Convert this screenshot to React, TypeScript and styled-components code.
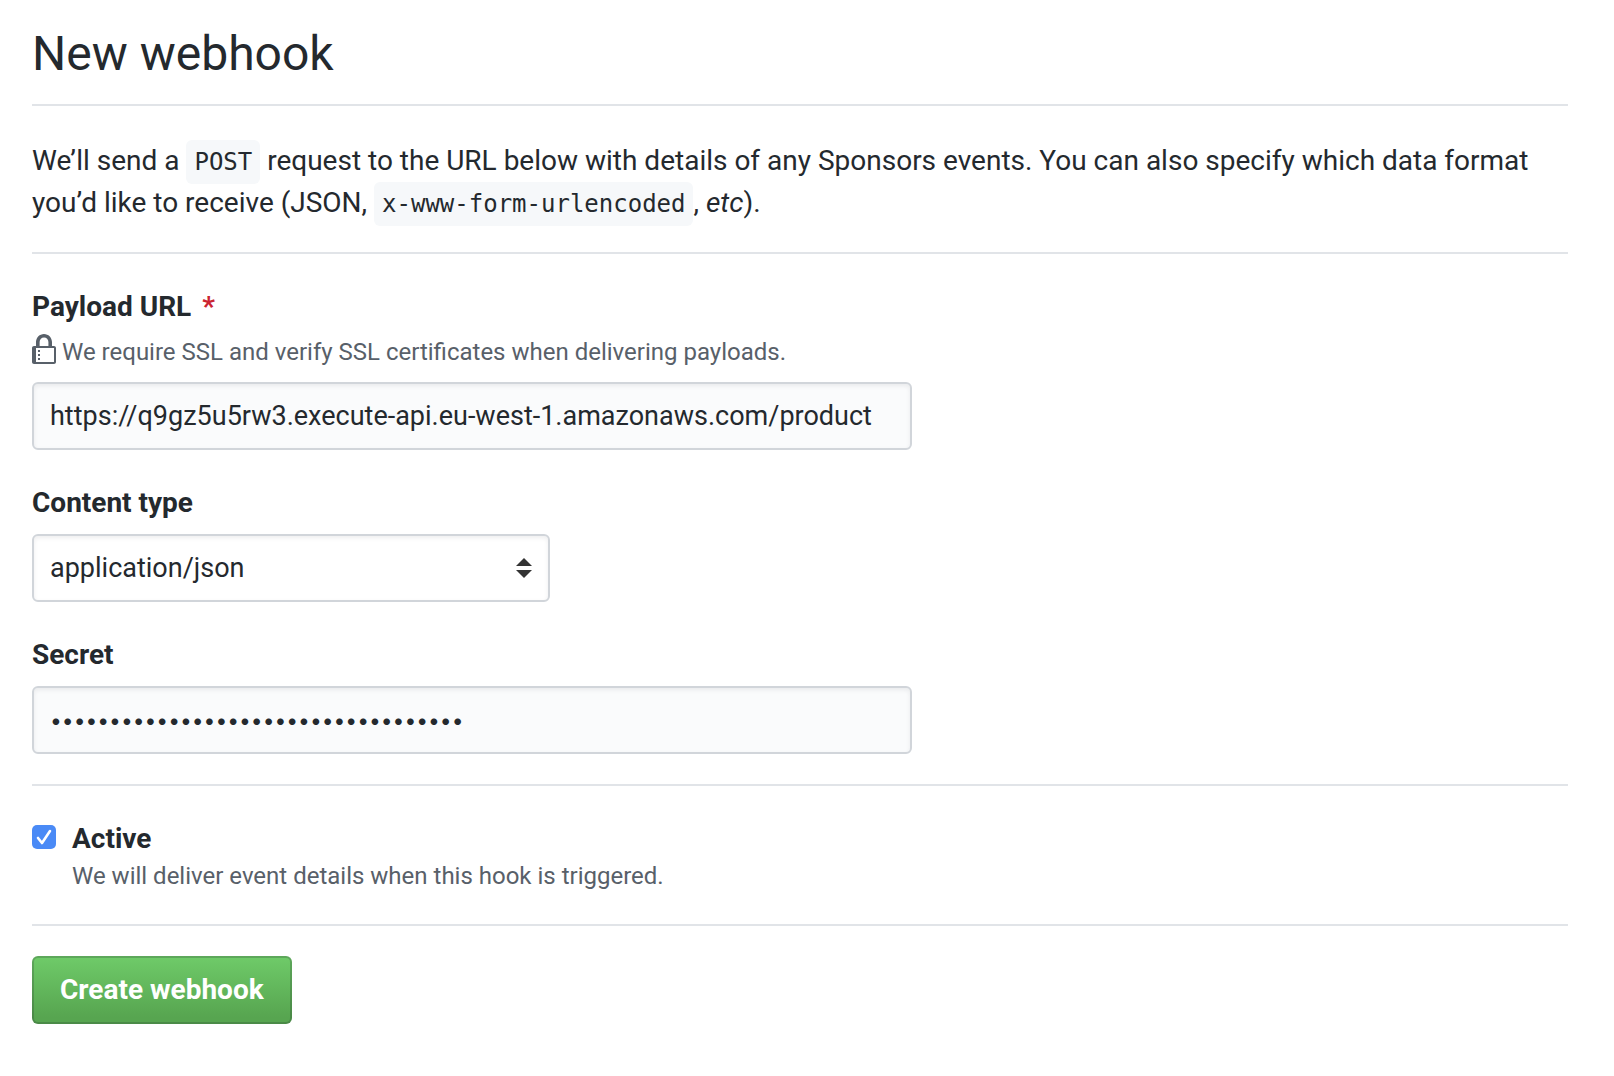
import { useState } from 'react';
import styled, { createGlobalStyle } from 'styled-components';

const sans = `Roboto, "Liberation Sans", sans-serif`;
const mono = `"DejaVu Sans Mono", "Liberation Mono", monospace`;

const arrows = `url("data:image/svg+xml,%3Csvg xmlns='http://www.w3.org/2000/svg' viewBox='0 0 16 20'%3E%3Cpath fill='%23333' d='M0 8 8 0l8 8zM0 12l8 8 8-8z'/%3E%3C/svg%3E")`;
const tick = `url("data:image/svg+xml,%3Csvg xmlns='http://www.w3.org/2000/svg' viewBox='0 0 24 24'%3E%3Cpath fill='none' stroke='%23fff' stroke-width='2.6' stroke-linecap='round' stroke-linejoin='round' d='M6 13l4 5L18 6'/%3E%3C/svg%3E")`;

const GlobalStyle = createGlobalStyle`
  *, *::before, *::after { box-sizing: border-box; }
  body {
    margin: 0;
    background: #fff;
    color: #24292e;
    font-family: ${sans};
    font-size: 28px;
    line-height: 42px;
  }
`;

const Page = styled.main`
  padding: 20px 46px 52px 32px;
`;

const Title = styled.h1`
  margin: 0;
  padding-bottom: 16px;
  border-bottom: 2px solid #e1e4e8;
  font-size: 48px;
  font-weight: 400;
  line-height: 68px;
`;

const Intro = styled.p`
  margin: 34px 0 28px;
`;

const Code = styled.code`
  padding: 8px;
  border-radius: 6px;
  background: #f6f8fa;
  font-family: ${mono};
  font-size: 24px;
  line-height: 24px;
`;

const Form = styled.form`
  display: flex;
  flex-direction: column;
`;

const Section = styled.div`
  display: flex;
  flex-direction: column;
  align-items: flex-start;
  gap: 30px;
  padding: 30px 0;
  border-top: 2px solid #e1e4e8;
`;

const Field = styled.div`
  display: flex;
  flex-direction: column;
  align-items: flex-start;
  gap: 12px;
  width: 100%;
`;

const FieldHead = styled.div`
  display: flex;
  flex-direction: column;
  gap: 8px;
`;

const Label = styled.label`
  display: block;
  padding-top: 4px;
  font-weight: 700;
  line-height: 38px;
`;

const Required = styled.span`
  margin-left: 4px;
  color: #cb2431;
`;

const Note = styled.p`
  display: flex;
  align-items: flex-start;
  gap: 6px;
  margin: 0;
  color: #586069;
  font-size: 24px;
  line-height: 36px;
`;

const LockIcon = styled.svg`
  flex: none;
  width: 24px;
  height: 32px;
  fill: currentColor;
`;

const TextBox = styled.input`
  width: 100%;
  max-width: 880px;
  height: 68px;
  padding: 0 16px;
  border: 2px solid #d1d5da;
  border-radius: 6px;
  background: #fafbfc;
  box-shadow: inset 0 2px 4px rgba(27, 31, 35, 0.075);
  color: inherit;
  font: inherit;
  font-size: 27px;
  outline: none;

  &[type='password'] {
    font-family: Inter, ${sans};
    font-size: 21px;
  }
`;

const Select = styled.select`
  appearance: none;
  width: 100%;
  max-width: 518px;
  height: 68px;
  padding: 0 48px 0 16px;
  border: 2px solid #d1d5da;
  border-radius: 6px;
  background: #fff ${arrows} no-repeat right 16px center / 16px 20px;
  box-shadow: inset 0 2px 4px rgba(27, 31, 35, 0.075);
  color: inherit;
  font: inherit;
  font-size: 27px;
`;

const CheckRow = styled.div`
  display: grid;
  grid-template-columns: 24px 1fr;
  column-gap: 16px;
  align-items: center;
`;

const Checkbox = styled.input`
  appearance: none;
  width: 24px;
  height: 24px;
  margin: 0;
  border: 1px solid #b8bcc2;
  border-radius: 5px;

  &:checked {
    border: 0;
    background: #4a8af6 ${tick} center / 24px 24px;
  }
`;

const CheckNote = styled(Note)`
  grid-column: 2;
`;

const Submit = styled.button`
  height: 68px;
  padding: 0 26px;
  border: 2px solid rgba(27, 31, 35, 0.2);
  border-radius: 6px;
  background: #57a550 linear-gradient(180deg, #6fcb69, #57a550 90%) border-box;
  color: #fff;
  font: inherit;
  font-weight: 700;
`;

export default function App() {
  const [url, setUrl] = useState('https://q9gz5u5rw3.execute-api.eu-west-1.amazonaws.com/product');
  const [secret, setSecret] = useState('x'.repeat(35));
  const [active, setActive] = useState(true);

  return (
    <>
      <GlobalStyle />
      <Page>
        <Title>New webhook</Title>
        <Intro>
          We’ll send a <Code>POST</Code> request to the URL below with details of any Sponsors
          events. You can also specify which data format you’d like to receive (JSON,{' '}
          <Code>x-www-form-urlencoded</Code>, <em>etc</em>).
        </Intro>
        <Form onSubmit={(e) => e.preventDefault()}>
          <Section>
            <Field>
              <FieldHead>
                <Label htmlFor="payload-url">
                  Payload URL <Required>*</Required>
                </Label>
                <Note id="ssl-note">
                  <LockIcon viewBox="0 0 12 16" aria-hidden="true">
                    <path
                      fillRule="evenodd"
                      d="M4 13H3v-1h1v1zm8-6v7c0 .55-.45 1-1 1H1c-.55 0-1-.45-1-1V7c0-.55.45-1 1-1h1V4c0-2.2 1.8-4 4-4s4 1.8 4 4v2h1c.55 0 1 .45 1 1zM3.8 6h4.41V4c0-1.22-.98-2.2-2.2-2.2-1.22 0-2.2.98-2.2 2.2v2H3.8zM11 7H2v7h9V7zM4 8H3v1h1V8zm0 2H3v1h1v-1z"
                    />
                  </LockIcon>
                  We require SSL and verify SSL certificates when delivering payloads.
                </Note>
              </FieldHead>
              <TextBox
                id="payload-url"
                type="text"
                spellCheck={false}
                aria-describedby="ssl-note"
                required
                value={url}
                onChange={(e) => setUrl(e.target.value)}
              />
            </Field>
            <Field>
              <Label htmlFor="content-type">Content type</Label>
              <Select id="content-type" defaultValue="application/json">
                <option>application/json</option>
                <option>application/x-www-form-urlencoded</option>
              </Select>
            </Field>
            <Field>
              <Label htmlFor="secret">Secret</Label>
              <TextBox
                id="secret"
                type="password"
                autoComplete="off"
                value={secret}
                onChange={(e) => setSecret(e.target.value)}
              />
            </Field>
          </Section>
          <Section>
            <CheckRow>
              <Checkbox
                id="active"
                type="checkbox"
                aria-describedby="active-note"
                checked={active}
                onChange={(e) => setActive(e.target.checked)}
              />
              <Label htmlFor="active">Active</Label>
              <CheckNote id="active-note">
                We will deliver event details when this hook is triggered.
              </CheckNote>
            </CheckRow>
          </Section>
          <Section>
            <Submit type="submit">Create webhook</Submit>
          </Section>
        </Form>
      </Page>
    </>
  );
}
